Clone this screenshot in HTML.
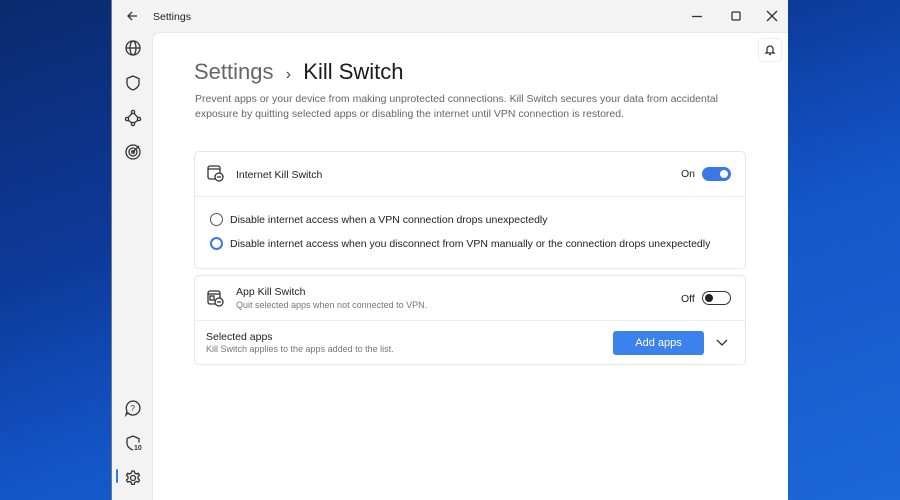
<!DOCTYPE html>
<html><head><style>
*{margin:0;padding:0;box-sizing:border-box}
body{width:900px;height:500px;overflow:hidden;font-family:"Liberation Sans",sans-serif;position:relative;
background:linear-gradient(160deg,#0a2a6e 0%,#0d3a9a 35%,#1356c8 60%,#1d67d8 100%);}
.win{position:absolute;left:111px;top:0;width:677px;height:500px;background:#f3f3f3;border-left:1px solid #6a7a9a}
.title{position:absolute;left:41px;top:11px;font-size:10.5px;color:#222}
.content{position:absolute;left:40px;top:32px;right:0;bottom:0;background:#fff;border-top-left-radius:8px;border-top:1px solid #e8e8e8;border-left:1px solid #e8e8e8}
.ic{position:absolute;stroke:#333;fill:none;stroke-width:1.3}
h1{position:absolute;left:41px;top:26px;font-size:22px;font-weight:normal;color:#666;white-space:nowrap}
h1 b{color:#1a1a1a;font-weight:normal}
.desc{position:absolute;left:42px;top:59px;font-size:10.5px;line-height:15px;color:#666;width:540px}
.card{position:absolute;left:41px;width:552px;background:#fff;border:1px solid #e6e6e6;border-radius:5px}
.row{position:absolute;font-size:10.5px;color:#222;white-space:nowrap}
.sub{font-size:9px;color:#777}
.tog{position:absolute;width:29px;height:14px;border-radius:7px}
.radio{position:absolute;width:13px;height:13px;border-radius:50%;border:1.3px solid #555}
</style></head><body>
<div class="win">
 <svg class="ic" style="left:14px;top:10px" width="12" height="12" viewBox="0 0 12 12"><path d="M11 6H2M6 2L2 6l4 4"/></svg>
 <div class="title">Settings</div>
 <svg class="ic" style="left:579px;top:10px" width="12" height="12"><path d="M1 6.5h10"/></svg>
 <svg class="ic" style="left:619px;top:11px" width="12" height="12"><rect x="1" y="1" width="8" height="8" rx="1"/></svg>
 <svg class="ic" style="left:654px;top:10px" width="12" height="12"><path d="M1 1l10 10M11 1L1 11"/></svg>
 <svg class="ic" style="left:12px;top:39px" width="18" height="18" viewBox="0 0 18 18"><circle cx="9" cy="9" r="7"/><ellipse cx="9" cy="9" rx="3" ry="7"/><path d="M2 9h14"/></svg>
 <svg class="ic" style="left:12px;top:74px" width="18" height="18" viewBox="0 0 18 18"><path d="M9 2l6 2.5v5c0 3-3 5.5-6 6.5-3-1-6-3.5-6-6.5v-5z"/></svg>
 <svg class="ic" style="left:12px;top:109px" width="18" height="18" viewBox="0 0 18 18"><circle cx="9" cy="3" r="1.6"/><circle cx="3" cy="10" r="1.6"/><circle cx="15" cy="10" r="1.6"/><circle cx="9" cy="15" r="1.6"/><path d="M8 4.3L4 8.7M10 4.3l4 4.4M4.2 11.2L7.8 14M13.8 11.2L10.2 14"/></svg>
 <svg class="ic" style="left:12px;top:143px" width="18" height="18" viewBox="0 0 18 18"><circle cx="9" cy="9" r="7"/><circle cx="9" cy="9" r="4"/><circle cx="9" cy="9" r="1.3"/><path d="M9 9l6-6"/></svg>
 <svg class="ic" style="left:12px;top:399px" width="18" height="18" viewBox="0 0 18 18"><path d="M9 2a7 7 0 1 1-5 12l-2 2 1-4A7 7 0 0 1 9 2z"/><text x="6.5" y="12" font-size="8" fill="#333" stroke="none" font-family="Liberation Sans">?</text></svg>
 <svg class="ic" style="left:12px;top:434px" width="20" height="18" viewBox="0 0 20 18"><path d="M9 2l6 2.5v4M3 4.5L9 2M3 4.5v5c0 3 3 5.5 6 6.5"/><text x="10" y="16" font-size="7" fill="#333" stroke="none" font-weight="bold" font-family="Liberation Sans">10</text></svg>
 <div style="position:absolute;left:4px;top:469px;width:2px;height:14px;background:#3b78e7;border-radius:1px"></div>
 <svg class="ic" style="left:12px;top:469px" width="18" height="18" viewBox="0 0 18 18"><circle cx="9" cy="9" r="2.5"/><path d="M7.8 2h2.4l.5 2 1.6.9 2-.6 1.2 2-1.5 1.5v1.8l1.5 1.5-1.2 2-2-.6-1.6.9-.5 2H7.8l-.5-2-1.6-.9-2 .6-1.2-2 1.5-1.5V7.8L2.5 6.3l1.2-2 2 .6 1.6-.9z"/></svg>
 <div class="content">
  <div style="position:absolute;left:605px;top:5px;width:24px;height:24px;border:1px solid #eee;border-radius:4px"></div>
  <svg class="ic" style="left:611px;top:11px" width="12" height="12" viewBox="0 0 12 12"><path d="M3 8V5a3 3 0 0 1 6 0v3l1 1H2zM5 10.5h2"/></svg>
  <h1>Settings &nbsp;<span style="font-size:16px;color:#444">›</span>&nbsp; <b>Kill Switch</b></h1>
  <div class="desc">Prevent apps or your device from making unprotected connections. Kill Switch secures your data from accidental exposure by quitting selected apps or disabling the internet until VPN connection is restored.</div>
  <div class="card" style="top:118px;height:118px">
   <svg class="ic" style="left:12px;top:13px" width="18" height="18" viewBox="0 0 18 18" stroke-width="1.1"><rect x="1" y="1" width="12" height="13" rx="2"/><path d="M1 4h12"/><circle cx="12" cy="12" r="4" fill="#fff"/><path d="M10 12h4"/></svg>
   <div class="row" style="left:41px;top:17px">Internet Kill Switch</div>
   <div class="row" style="left:486px;top:16px">On</div>
   <div class="tog" style="left:507px;top:15px;background:#3b78e7"><div style="position:absolute;right:3px;top:3px;width:8px;height:8px;border-radius:50%;background:#fff"></div></div>
   <div style="position:absolute;left:0;right:0;top:44px;border-top:1px solid #eee"></div>
   <div class="radio" style="left:15px;top:61px"></div>
   <div class="row" style="left:35px;top:62px">Disable internet access when a VPN connection drops unexpectedly</div>
   <div class="radio" style="left:15px;top:85px;border:2.5px solid #3b78e7"></div>
   <div class="row" style="left:35px;top:86px">Disable internet access when you disconnect from VPN manually or the connection drops unexpectedly</div>
  </div>
  <div class="card" style="top:242px;height:90px">
   <svg class="ic" style="left:12px;top:14px" width="18" height="18" viewBox="0 0 18 18" stroke-width="1.1"><rect x="1" y="1" width="12" height="13" rx="2"/><path d="M1 4h12"/><rect x="3" y="6" width="4" height="4"/><circle cx="12" cy="12" r="4" fill="#fff"/><path d="M10 12h4"/></svg>
   <div class="row" style="left:41px;top:10px">App Kill Switch<div class="sub" style="margin-top:2px">Quit selected apps when not connected to VPN.</div></div>
   <div class="row" style="left:486px;top:17px">Off</div>
   <div class="tog" style="left:507px;top:15px;border:1.3px solid #333"><div style="position:absolute;left:2px;top:2px;width:8px;height:8px;border-radius:50%;background:#222"></div></div>
   <div style="position:absolute;left:0;right:0;top:44px;border-top:1px solid #eee"></div>
   <div class="row" style="left:11px;top:55px">Selected apps<div class="sub" style="margin-top:1px">Kill Switch applies to the apps added to the list.</div></div>
   <div style="position:absolute;left:418px;top:55px;width:91px;height:24px;background:#3b82ec;border-radius:3px;color:#fff;font-size:11px;text-align:center;line-height:24px">Add apps</div>
   <svg class="ic" style="left:521px;top:62px" width="12" height="10"><path d="M1 2l5 5 5-5"/></svg>
  </div>
 </div>
</div>
</body></html>
